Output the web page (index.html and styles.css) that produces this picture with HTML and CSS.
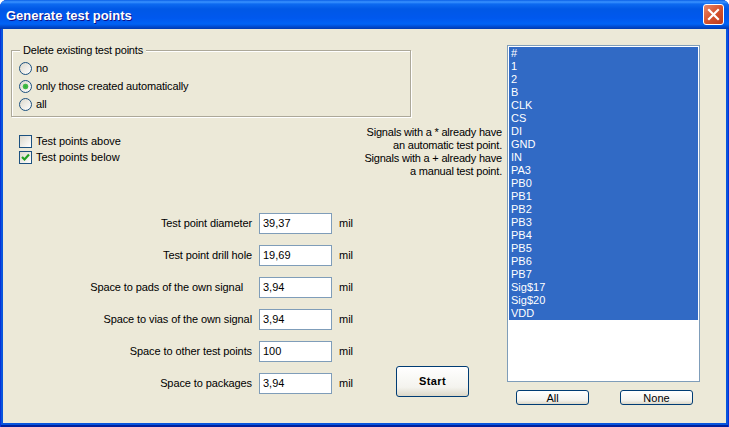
FILE: index.html
```html
<!DOCTYPE html>
<html lang="en">

<head>
    <meta charset="UTF-8">
    <title>Generate test points</title>
    <link rel="stylesheet" href="styles.css">
</head>

<body>
    <div class="window">
        <div class="titlebar">
            <span class="title">Generate test points</span>
            <button class="close" type="button" aria-label="Close">
                <svg width="13" height="13" viewBox="0 0 13 13">
                    <path d="M2 2 L11 11 M11 2 L2 11" stroke="#fff" stroke-width="2.2" stroke-linecap="square" fill="none" />
                </svg>
            </button>
        </div>
        <div class="client">
            <div class="left">
                <div class="group">
                    <span class="legend">Delete existing test points</span>
                    <div class="opt"><span class="radio"></span>no</div>
                    <div class="opt"><span class="radio on"></span>only those created automatically</div>
                    <div class="opt"><span class="radio"></span>all</div>
                </div>
                <div class="mid">
                    <div class="checks">
                        <div class="check"><span class="box"></span>Test points above</div>
                        <div class="check">
                            <span class="box">
                                <svg width="11" height="11" viewBox="0 0 11 11">
                                    <path d="M2 5 L4.5 7.5 L9 2.5" stroke="#21a121" stroke-width="2.2" fill="none" />
                                </svg>
                            </span>Test points below
                        </div>
                    </div>
                    <p class="note">Signals with a * already have<br>an automatic test point.<br>Signals with a + already have<br>a manual test point.</p>
                </div>
                <div class="bottom">
                    <div class="form">
                        <label>Test point diameter</label><input class="field" type="text" value="39,37"><span>mil</span>
                        <label>Test point drill hole</label><input class="field" type="text" value="19,69"><span>mil</span>
                        <label class="shifted">Space to pads of the own signal</label><input class="field" type="text" value="3,94"><span>mil</span>
                        <label>Space to vias of the own signal</label><input class="field" type="text" value="3,94"><span>mil</span>
                        <label>Space to other test points</label><input class="field" type="text" value="100"><span>mil</span>
                        <label>Space to packages</label><input class="field" type="text" value="3,94"><span>mil</span>
                    </div>
                    <button class="btn start" type="button">Start</button>
                </div>
            </div>
            <div class="right">
                <ul class="list">
                    <li>#</li>
                    <li>1</li>
                    <li>2</li>
                    <li>B</li>
                    <li>CLK</li>
                    <li>CS</li>
                    <li>DI</li>
                    <li>GND</li>
                    <li>IN</li>
                    <li>PA3</li>
                    <li>PB0</li>
                    <li>PB1</li>
                    <li>PB2</li>
                    <li>PB3</li>
                    <li>PB4</li>
                    <li>PB5</li>
                    <li>PB6</li>
                    <li>PB7</li>
                    <li>Sig$17</li>
                    <li>Sig$20</li>
                    <li>VDD</li>
                </ul>
                <div class="list-btns">
                    <button class="btn small" type="button">All</button>
                    <button class="btn small" type="button">None</button>
                </div>
            </div>
        </div>
    </div>
</body>

</html>
```

FILE: styles.css
```css
* {
    box-sizing: border-box;
}

body {
    margin: 0;
    background-color: #fff;
    font-family: 'Liberation Sans', Arial, sans-serif;
    font-size: 11px;
    color: #000;
}

.window {
    width: 729px;
    height: 427px;
    display: flex;
    flex-direction: column;
    border-radius: 7px 7px 0 0;
    overflow: hidden;
    background-color: #0855dd;
    padding: 0 3px 4px;
    box-shadow: inset 1px 0 0 #0831d9, inset -1px 0 0 #0831d9, inset 0 -2px 0 #00209c;
}

.titlebar {
    height: 29px;
    margin: 0 -3px;
    padding: 1px 5px 0 6px;
    display: flex;
    align-items: center;
    justify-content: space-between;
    background: linear-gradient(to bottom, #0a5fe6 0, #3a93ff 2px, #0d6af0 4px, #0058e6 9px, #0058ee 18px, #0063f5 24px, #0048cc 27px, #003bb0 29px);
}

.title {
    font-size: 13px;
    font-weight: bold;
    color: #fff;
    text-shadow: 1px 1px 0 #0f1089;
}

.close {
    width: 21px;
    height: 21px;
    margin-top: -1px;
    padding: 0;
    display: flex;
    align-items: center;
    justify-content: center;
    border: 1px solid #fff;
    border-radius: 3px;
    background: linear-gradient(135deg, #e8886c, #d5532f 50%, #bf3a1a);
}

.client {
    flex: 1;
    display: flex;
    background-color: #ece9d8;
}

.left {
    width: 500px;
    padding: 21px 0 0 8px;
}

.group {
    position: relative;
    width: 400px;
    height: 67px;
    padding-top: 8px;
    padding-left: 7px;
    border: 1px solid #aca899;
    box-shadow: 1px 1px 0 #fff, inset 1px 1px 0 #fff;
    letter-spacing: -0.15px;
}

.legend {
    position: absolute;
    top: -7px;
    left: 8px;
    padding: 0 3px;
    line-height: 13px;
    letter-spacing: -0.2px;
    background-color: #ece9d8;
}

.opt {
    height: 18px;
    display: flex;
    align-items: center;
}

.radio {
    width: 13px;
    height: 13px;
    margin-right: 4px;
    border: 1px solid #1c5180;
    border-radius: 50%;
    background: linear-gradient(135deg, #dcd8cc, #fff);
}

.radio.on {
    background: radial-gradient(circle, #2fae35 0, #4bbd4f 2.5px, transparent 3.2px), linear-gradient(135deg, #dcd8cc, #fff);
}

.mid {
    height: 52px;
    margin-top: 9px;
    display: flex;
    justify-content: space-between;
}

.checks {
    padding: 9px 0 0 8px;
}

.check {
    height: 16px;
    display: flex;
    align-items: flex-start;
    line-height: 13px;
    letter-spacing: -0.05px;
}

.box {
    width: 13px;
    height: 13px;
    margin-right: 4px;
    border: 1px solid #1c5180;
    background: linear-gradient(135deg, #dcd8cc, #fff);
    display: flex;
}

.note {
    margin: 0 1px 0 0;
    line-height: 13px;
    letter-spacing: -0.2px;
    text-align: right;
}

.bottom {
    margin-top: 35px;
    display: flex;
    align-items: flex-start;
}

.form {
    display: grid;
    grid-template-columns: 241px 73px 30px;
    column-gap: 7px;
    row-gap: 11px;
    align-items: center;
}

.form label {
    padding-bottom: 2px;
    text-align: right;
    letter-spacing: -0.1px;
}

.form label.shifted {
    margin-right: 9px;
}

.form span {
    margin-left: 0;
    padding-bottom: 2px;
}

.field {
    width: 73px;
    height: 21px;
    padding: 0 3px 2px;
    border: 1px solid #7f9db9;
    background-color: #fff;
    font-family: inherit;
    font-size: 11px;
    color: #000;
    outline: none;
}

.btn {
    padding: 0;
    border: 1px solid #003c74;
    border-radius: 3px;
    background: linear-gradient(to bottom, #fff, #f4f3ee 70%, #dcd8c8);
    font-family: inherit;
    font-size: 11px;
    color: #000;
}

.start {
    width: 73px;
    height: 31px;
    margin: 153px 0 0 27px;
    padding-bottom: 2px;
    font-weight: bold;
    letter-spacing: 0.4px;
}

.right {
    width: 193px;
    margin-left: 4px;
    padding-top: 16px;
}

.list {
    width: 193px;
    height: 337px;
    margin: 0;
    padding: 1px;
    list-style: none;
    border: 1px solid #7f9db9;
    background-color: #fff;
}

.list li {
    height: 13px;
    line-height: 13px;
    padding-left: 2px;
    background-color: #316ac5;
    color: #fff;
}

.list-btns {
    margin-top: 8px;
    padding-left: 9px;
    display: flex;
    gap: 31px;
}

.small {
    width: 73px;
    height: 15px;
    line-height: 12px;
}
```
